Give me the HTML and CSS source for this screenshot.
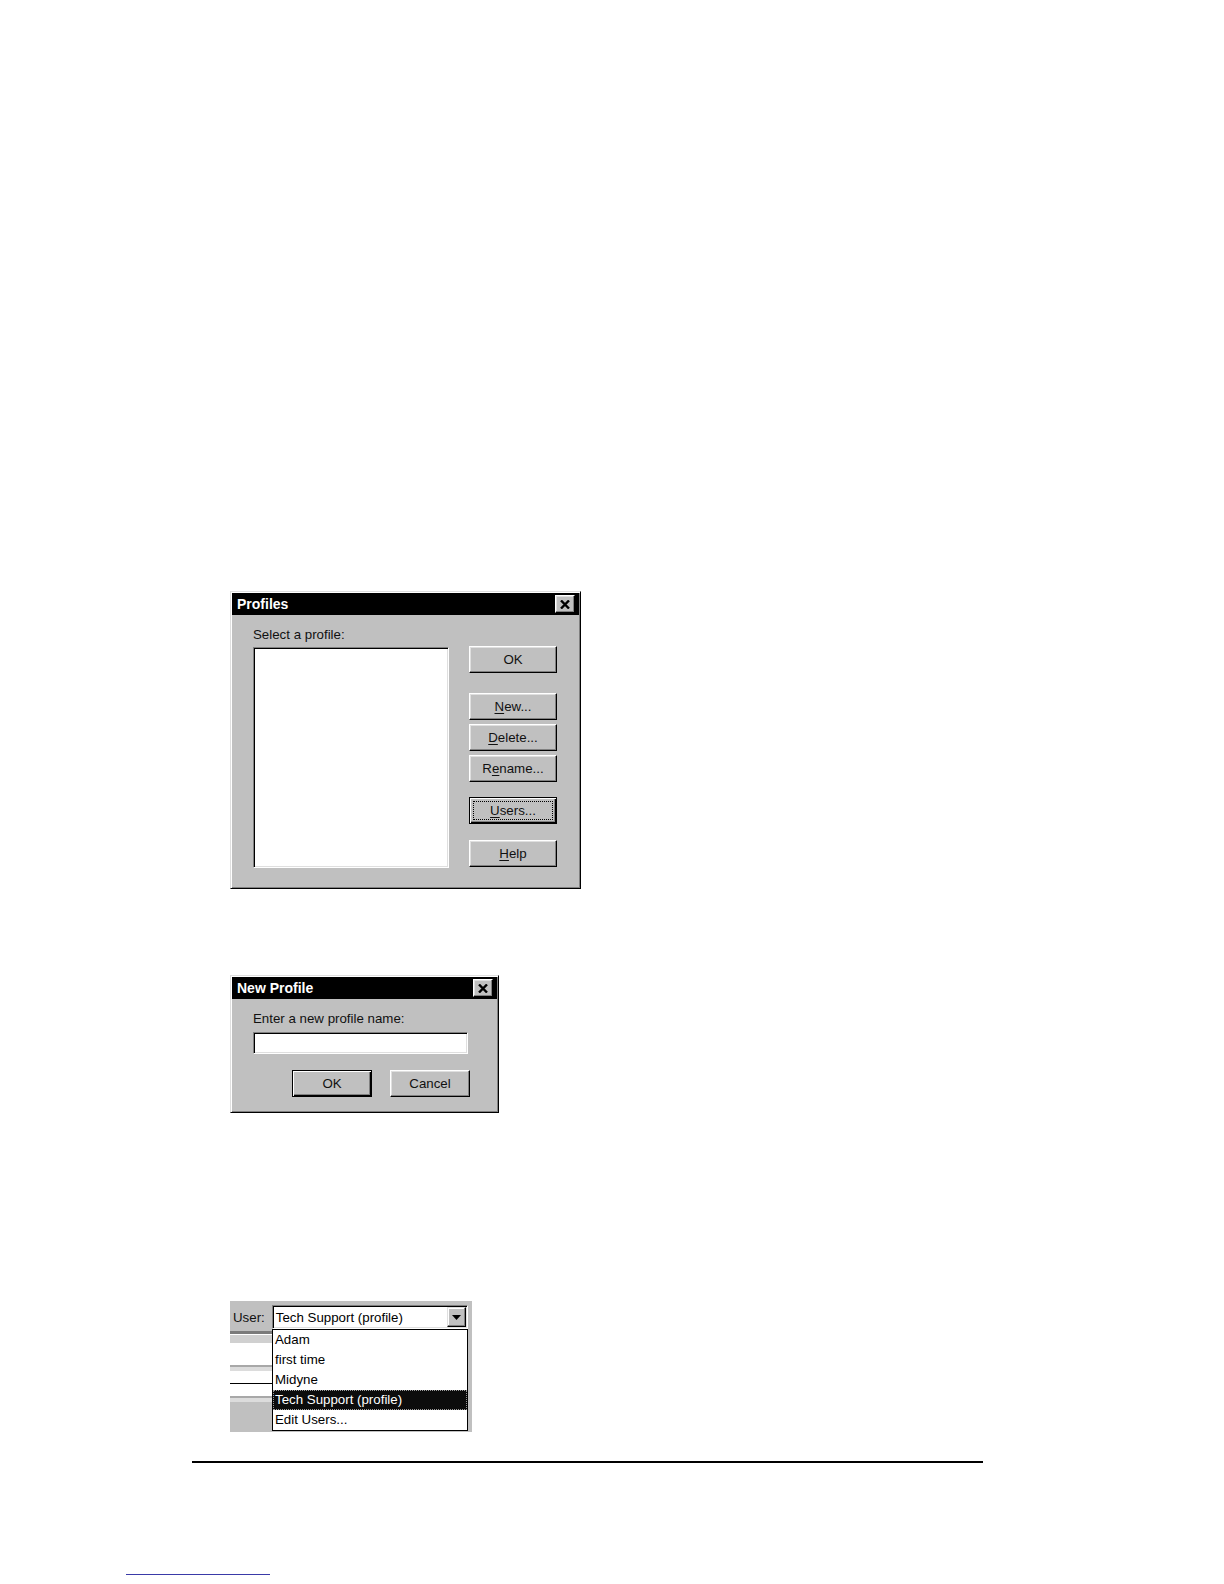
FILE: index.html
```html
<!DOCTYPE html>
<html lang="en">
<head>
<meta charset="utf-8">
<title>Profiles</title>
<link rel="stylesheet" href="styles.css">
</head>
<body>
<div class="page">
  <section class="dialog profiles">
    <header class="titlebar">
      <span class="title">Profiles</span>
      <span class="closebtn"><svg width="10" height="9" viewBox="0 0 10 9"><path d="M1 0.5 L9 8.5 M9 0.5 L1 8.5" stroke="#000" stroke-width="2.4" fill="none"/></svg></span>
    </header>
    <div class="profiles-body">
      <div class="list-col">
        <div class="label">Select a profile:</div>
        <div class="listbox"></div>
      </div>
      <div class="btn-col">
        <div class="btn">OK</div>
        <div class="btn gap-20"><span><u>N</u>ew...</span></div>
        <div class="btn gap-4"><span><u>D</u>elete...</span></div>
        <div class="btn gap-4"><span>R<u>e</u>name...</span></div>
        <div class="btn focused gap-15"><span class="focusrect"><span><u>U</u>sers...</span></span></div>
        <div class="btn gap-16"><span><u>H</u>elp</span></div>
      </div>
    </div>
  </section>

  <section class="dialog newprofile">
    <header class="titlebar">
      <span class="title">New Profile</span>
      <span class="closebtn"><svg width="10" height="9" viewBox="0 0 10 9"><path d="M1 0.5 L9 8.5 M9 0.5 L1 8.5" stroke="#000" stroke-width="2.4" fill="none"/></svg></span>
    </header>
    <div class="np-body">
      <div class="label">Enter a new profile name:</div>
      <div class="textbox"></div>
      <div class="np-buttons">
        <div class="btn np default">OK</div>
        <div class="btn np">Cancel</div>
      </div>
    </div>
  </section>

  <section class="userbox">
    <div class="user-row">
      <span class="user-label">User:</span>
      <div class="combo">
        <span class="combo-text">Tech Support (profile)</span>
        <span class="dd-btn"><svg width="9" height="5" viewBox="0 0 9 5"><path d="M0 0 H9 L4.5 5 Z" fill="#000"/></svg></span>
      </div>
    </div>
    <div class="strips">
      <div class="s s1"></div>
      <div class="s s2"></div>
      <div class="s s3"></div>
      <div class="s s4"></div>
      <div class="s s5"></div>
      <div class="s s6"></div>
      <div class="s s7"></div>
      <div class="s s8"></div>
      <div class="s s9"></div>
      <div class="s s10"></div>
      <div class="s s11"></div>
    </div>
    <ul class="dd-list">
      <li>Adam</li>
      <li>first time</li>
      <li>Midyne</li>
      <li class="selected">Tech Support (profile)</li>
      <li>Edit Users...</li>
    </ul>
  </section>

  <div class="rule"></div>
  <div class="footline"></div>
</div>
</body>
</html>
```

FILE: styles.css
```css
html, body {
  margin: 0;
  background: #fff;
}
body {
  font-family: "Liberation Sans", Arial, sans-serif;
  font-size: 13.3px;
  color: #000;
}
.page {
  display: flex;
  flex-direction: column;
  align-items: flex-start;
  padding-top: 591px;
  min-height: 1584px;
  box-sizing: border-box;
}

/* window frame */
.dialog {
  background: #c0c0c0;
  box-sizing: border-box;
  border: 1px solid;
  border-color: #dfdfdf #000 #000 #dfdfdf;
  box-shadow: inset 1px 1px #fff, inset -1px -1px #808080;
  padding: 1px;
  display: flex;
  flex-direction: column;
}
.titlebar {
  flex: none;
  height: 22px;
  background: #000;
  color: #fff;
  display: flex;
  align-items: center;
  justify-content: space-between;
  padding: 0 4px 0 5px;
}
.title {
  font-weight: bold;
  font-size: 14px;
}
.closebtn {
  width: 20px;
  height: 18px;
  box-sizing: border-box;
  background: #c0c0c0;
  border: 1px solid;
  border-color: #fff #000 #000 #fff;
  box-shadow: inset -1px -1px #808080, inset 1px 1px #dfdfdf;
  display: flex;
  align-items: center;
  justify-content: center;
}
.label {
  height: 16px;
  line-height: 16px;
  color: #111;
}

/* raised button */
.btn {
  width: 88px;
  height: 27px;
  box-sizing: border-box;
  background: #c0c0c0;
  border: 1px solid;
  border-color: #fff #000 #000 #fff;
  box-shadow: inset -1px -1px #808080, inset 1px 1px #dfdfdf;
  display: flex;
  align-items: center;
  justify-content: center;
  color: #111;
}
.btn u {
  text-decoration-thickness: 1px;
  text-underline-offset: 2px;
}
.btn.focused,
.btn.default {
  border: 1px solid #000;
  box-shadow: inset 1px 1px #fff, inset -1px -1px #000, inset -2px -2px #808080;
}
.btn.focused {
  padding: 3px;
  align-items: stretch;
}
.focusrect {
  flex: 1;
  border: 1px dotted #000;
  display: flex;
  align-items: center;
  justify-content: center;
}
.gap-4 { margin-top: 4px; }
.gap-15 { margin-top: 15px; }
.gap-16 { margin-top: 16px; }
.gap-20 { margin-top: 20px; }

/* sunken field */
.listbox,
.textbox {
  box-sizing: border-box;
  background: #fff;
  border: 1px solid;
  border-color: #808080 #fff #fff #808080;
  box-shadow: inset 1px 1px #000, inset -1px -1px #dfdfdf;
}

/* Profiles dialog */
.profiles {
  margin-left: 230px;
  width: 351px;
  height: 298px;
}
.profiles-body {
  display: flex;
  gap: 20px;
  padding: 12px 21px 0 21px;
}
.list-col {
  display: flex;
  flex-direction: column;
  gap: 4px;
}
.listbox {
  width: 196px;
  height: 221px;
}
.btn-col {
  display: flex;
  flex-direction: column;
  padding-top: 19px;
}

/* New Profile dialog */
.newprofile {
  margin: 86px 0 0 230px;
  width: 269px;
  height: 138px;
}
.np-body {
  display: flex;
  flex-direction: column;
  align-items: flex-start;
  padding: 12px 21px 0 21px;
}
.textbox {
  margin-top: 5px;
  width: 215px;
  height: 22px;
}
.np-buttons {
  display: flex;
  gap: 18px;
  margin: 16px 0 0 39px;
}
.btn.np {
  width: 80px;
}

/* User combo */
.userbox {
  margin: 188px 0 0 230px;
  width: 242px;
  height: 131px;
  background: #c0c0c0;
  position: relative;
  display: flex;
  flex-direction: column;
}
.user-row {
  display: flex;
  align-items: center;
  gap: 7px;
  height: 24px;
  padding: 4px 0 0 3px;
  margin-bottom: 2px;
}
.user-label {
  color: #111;
}
.combo {
  width: 196px;
  height: 24px;
  box-sizing: border-box;
  background: #fff;
  border: 1px solid;
  border-color: #808080 #fff #fff #808080;
  box-shadow: inset 1px 1px #000, inset -1px -1px #dfdfdf;
  padding: 1px;
  display: flex;
  align-items: center;
  justify-content: space-between;
}
.combo-text {
  margin-left: 2px;
}
.dd-btn {
  width: 19px;
  height: 20px;
  box-sizing: border-box;
  background: #c0c0c0;
  border: 1px solid;
  border-color: #dfdfdf #000 #000 #dfdfdf;
  box-shadow: inset -1px -1px #808080, inset 1px 1px #fff;
  display: flex;
  align-items: center;
  justify-content: center;
}
.strips {
  width: 42px;
  display: flex;
  flex-direction: column;
}
.s1 { height: 3px; background: #7b7b7b; }
.s2 { height: 1px; background: #fff; }
.s3 { height: 8px; background: #d0d0d0; }
.s4 { height: 22px; background: #fff; }
.s5 { height: 2px; background: #a8a8a8; }
.s6 { height: 4px; background: #dcdcdc; }
.s7 { height: 12px; background: #fff; }
.s8 { height: 1px; background: #000; }
.s9 { height: 12px; background: #fff; }
.s10 { height: 2px; background: #a8a8a8; }
.s11 { height: 4px; background: #dcdcdc; }

.dd-list {
  position: absolute;
  left: 42px;
  top: 28px;
  width: 196px;
  box-sizing: border-box;
  margin: 0;
  padding: 0;
  list-style: none;
  background: #fff;
  border: 1px solid #000;
}
.dd-list li {
  height: 20px;
  line-height: 20px;
  padding-left: 2px;
  white-space: nowrap;
}
.dd-list li.selected {
  background: #0c0c0c;
  color: #fff;
  border: 1px dotted #9a9a9a;
  height: 18px;
  line-height: 18px;
  padding-left: 1px;
}

.rule {
  margin: 29px 0 0 192px;
  width: 791px;
  height: 2px;
  background: #000;
}
.footline {
  margin: 111px 0 0 126px;
  width: 144px;
  height: 1px;
  background: #3a3aa8;
}
```
